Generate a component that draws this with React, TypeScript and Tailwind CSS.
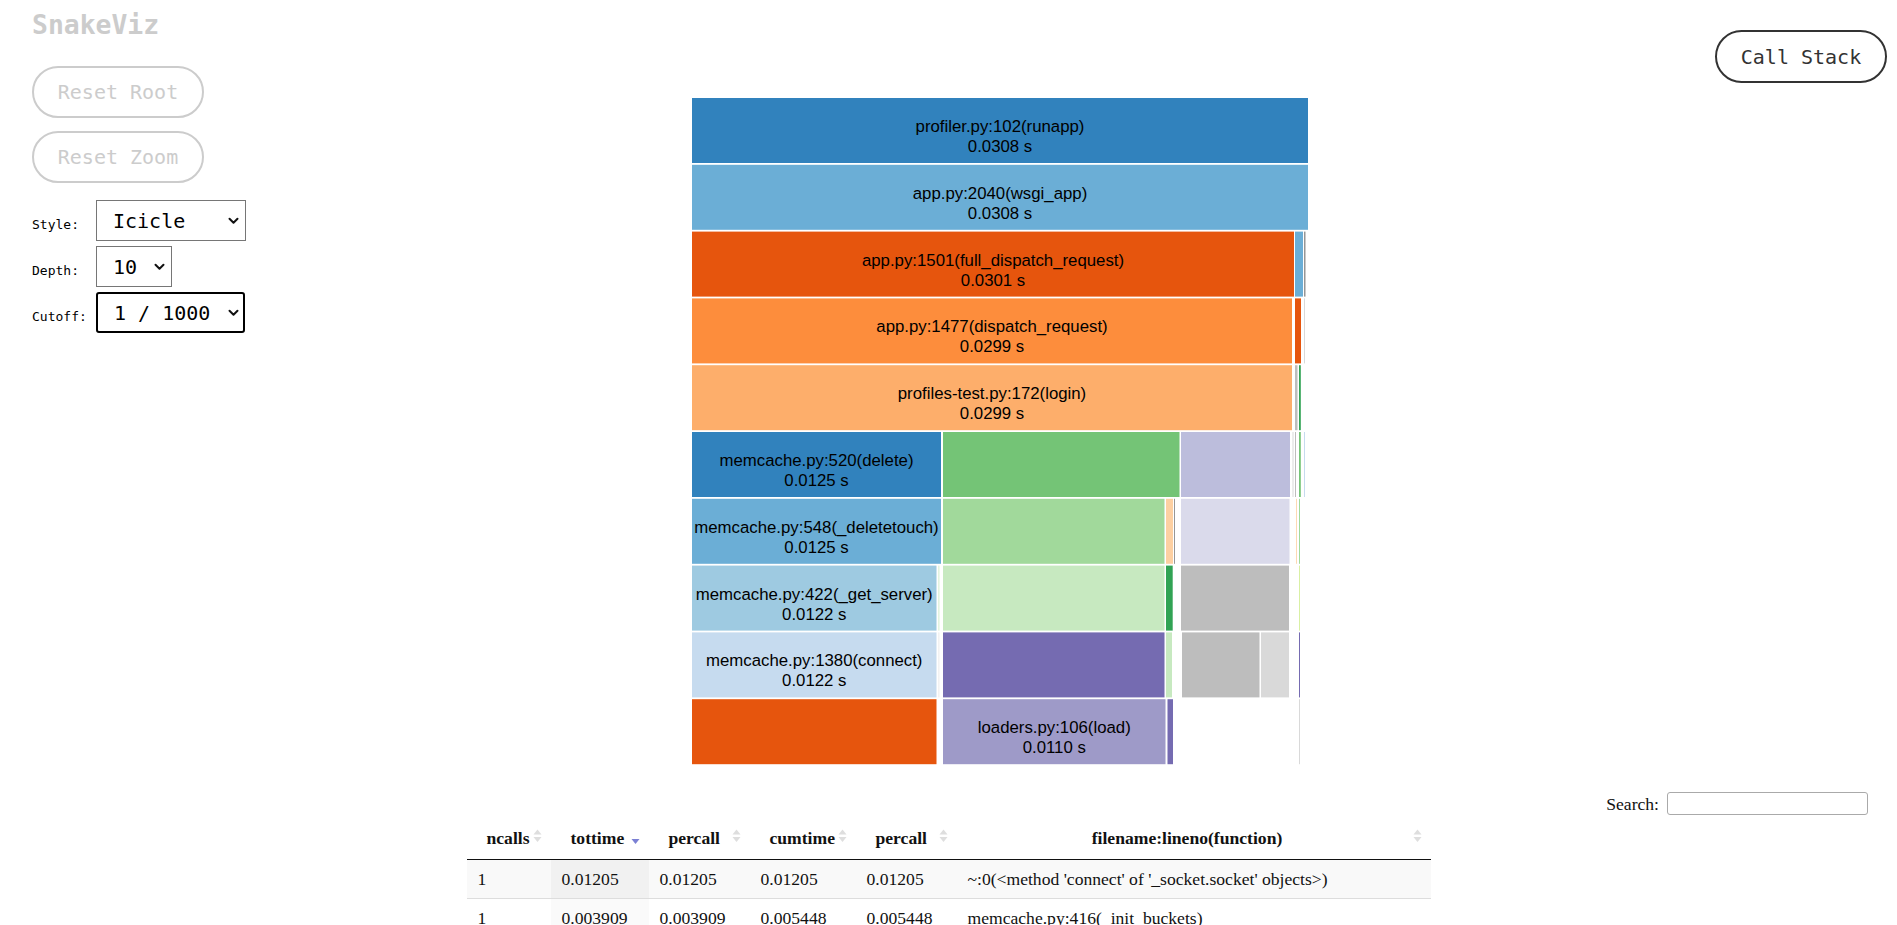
import { useState } from "react";

const MONO = "font-['DejaVu_Sans_Mono','Liberation_Mono',monospace]";
const SERIF = "font-['Liberation_Serif','Times_New_Roman',serif]";

const CHART_X = 692;
const CHART_W = 616;
const ROW_H = 66.8;

type Seg = { x0: number; x1: number; fill: string; name?: string; time?: string };

// icicle rows, x in page pixels
const rows: Seg[][] = [
  [{ x0: 692, x1: 1308, fill: "#3182bd", name: "profiler.py:102(runapp)", time: "0.0308 s" }],
  [{ x0: 692, x1: 1308, fill: "#6baed6", name: "app.py:2040(wsgi_app)", time: "0.0308 s" }],
  [
    { x0: 692, x1: 1294, fill: "#e6550d", name: "app.py:1501(full_dispatch_request)", time: "0.0301 s" },
    { x0: 1295, x1: 1303, fill: "#6baed6" },
    { x0: 1304, x1: 1305.5, fill: "#969696" },
  ],
  [
    { x0: 692, x1: 1292, fill: "#fd8d3c", name: "app.py:1477(dispatch_request)", time: "0.0299 s" },
    { x0: 1295, x1: 1301, fill: "#e6550d" },
    { x0: 1304, x1: 1305, fill: "#d9d9d9" },
  ],
  [
    { x0: 692, x1: 1292, fill: "#fdae6b", name: "profiles-test.py:172(login)", time: "0.0299 s" },
    { x0: 1295, x1: 1297.5, fill: "#bdbdbd" },
    { x0: 1299, x1: 1300.8, fill: "#31a354" },
  ],
  [
    { x0: 692, x1: 941, fill: "#3182bd", name: "memcache.py:520(delete)", time: "0.0125 s" },
    { x0: 943, x1: 1179.5, fill: "#74c476" },
    { x0: 1181, x1: 1290, fill: "#bcbddc" },
    { x0: 1292.5, x1: 1293.5, fill: "#d9d9d9" },
    { x0: 1295, x1: 1296, fill: "#bdbdbd" },
    { x0: 1299, x1: 1300.8, fill: "#74c476" },
    { x0: 1304, x1: 1305, fill: "#c6dbef" },
  ],
  [
    { x0: 692, x1: 941, fill: "#6baed6", name: "memcache.py:548(_deletetouch)", time: "0.0125 s" },
    { x0: 943, x1: 1164.5, fill: "#a1d99b" },
    { x0: 1166, x1: 1173, fill: "#fdd0a2" },
    { x0: 1174, x1: 1175, fill: "#969696" },
    { x0: 1181, x1: 1289.5, fill: "#dadaeb" },
    { x0: 1296, x1: 1296.8, fill: "#fdd0a2" },
    { x0: 1299, x1: 1300, fill: "#a1d99b" },
  ],
  [
    { x0: 692, x1: 936.5, fill: "#9ecae1", name: "memcache.py:422(_get_server)", time: "0.0122 s" },
    { x0: 938.5, x1: 939.3, fill: "#c7e9c0" },
    { x0: 943, x1: 1164.5, fill: "#c7e9c0" },
    { x0: 1166, x1: 1172.7, fill: "#31a354" },
    { x0: 1181, x1: 1289, fill: "#bdbdbd" },
    { x0: 1299, x1: 1300, fill: "#d9f0a3" },
  ],
  [
    { x0: 692, x1: 936.5, fill: "#c6dbef", name: "memcache.py:1380(connect)", time: "0.0122 s" },
    { x0: 938.5, x1: 939.3, fill: "#e5e5e5" },
    { x0: 943, x1: 1164.5, fill: "#756bb1" },
    { x0: 1166, x1: 1172, fill: "#c7e9c0" },
    { x0: 1182, x1: 1259.5, fill: "#bdbdbd" },
    { x0: 1261, x1: 1289, fill: "#d9d9d9" },
    { x0: 1299, x1: 1300, fill: "#756bb1" },
  ],
  [
    { x0: 692, x1: 936.5, fill: "#e6550d" },
    { x0: 943, x1: 1165.5, fill: "#9e9ac8", name: "loaders.py:106(load)", time: "0.0110 s" },
    { x0: 1167.5, x1: 1173, fill: "#756bb1" },
    { x0: 1299, x1: 1300, fill: "#d9d9d9" },
  ],
];

function Icicle() {
  return (
    <svg width={CHART_W} height={ROW_H * rows.length} className="block shrink-0">
      {rows.map((row, i) =>
        row.map((s, j) => {
          const top = i * ROW_H;
          const x = s.x0 - CHART_X;
          const w = s.x1 - s.x0;
          return (
            <g key={`${i}-${j}`}>
              <rect x={x} y={top} width={w} height={ROW_H - 1.8} fill={s.fill} />
              {s.name && (
                <text
                  x={x + w / 2}
                  textAnchor="middle"
                  fontFamily="'Liberation Sans', Arial, sans-serif"
                  fontSize={16.8}
                  fill="#000"
                >
                  <tspan x={x + w / 2} y={top + 34}>
                    {s.name}
                  </tspan>
                  <tspan x={x + w / 2} y={top + 54}>
                    {s.time}
                  </tspan>
                </text>
              )}
            </g>
          );
        })
      )}
    </svg>
  );
}

function Chevron() {
  return (
    <svg width="11" height="8" viewBox="0 0 11 8" className="pointer-events-none absolute">
      <path d="M1.5 1.8 L5.5 5.8 L9.5 1.8" fill="none" stroke="#111" strokeWidth="2" strokeLinecap="round" strokeLinejoin="round" />
    </svg>
  );
}

function SelectRow({
  label,
  value,
  options,
  width,
  chevronLeft,
  focused,
}: {
  label: string;
  value: string;
  options: string[];
  width: string;
  chevronLeft: string;
  focused?: boolean;
}) {
  const [v, setV] = useState(value);
  return (
    <div className="flex items-center">
      <label className={`${MONO} w-[64px] pt-[8px] text-[13px] text-black`}>{label}</label>
      <div className="relative flex items-center">
        <select
          value={v}
          onChange={(e) => setV(e.target.value)}
          className={`${MONO} ${width} h-[41px] appearance-none bg-white pl-[16px] text-[20px] text-black outline-none ${
            focused ? "rounded-[3px] border-2 border-black pl-[15px]" : "border border-[#767676]"
          }`}
        >
          {options.map((o) => (
            <option key={o}>{o}</option>
          ))}
        </select>
        <div className={`absolute ${chevronLeft} top-[17px]`}>
          <Chevron />
        </div>
      </div>
    </div>
  );
}

function SortIcon({ active }: { active?: boolean }) {
  if (active)
    return (
      <svg width="9" height="16" viewBox="0 0 9 16" className="absolute right-[9px] top-[13px]">
        <path d="M0.5 9 L8.5 9 L4.5 14 Z" fill="#7b80d4" />
      </svg>
    );
  return (
    <svg width="9" height="16" viewBox="0 0 9 16" className="absolute right-[9px] top-[11px]">
      <path d="M0.5 6.5 L8.5 6.5 L4.5 1.5 Z" fill="#dedede" />
      <path d="M0.5 9 L8.5 9 L4.5 14 Z" fill="#dedede" />
    </svg>
  );
}

const headers = [
  { label: "ncalls", w: "w-[84px]" },
  { label: "tottime", w: "w-[98px]", active: true },
  { label: "percall", w: "w-[101px]" },
  { label: "cumtime", w: "w-[106px]" },
  { label: "percall", w: "w-[101px]" },
  { label: "filename:lineno(function)", w: "w-[474px]" },
];

const tableRows = [
  ["1", "0.01205", "0.01205", "0.01205", "0.01205", "~:0(<method 'connect' of '_socket.socket' objects>)"],
  ["1", "0.003909", "0.003909", "0.005448", "0.005448", "memcache.py:416(_init_buckets)"],
];

export default function App() {
  return (
    <div className="min-h-screen bg-white">
      <div className="flex items-start">
        {/* controls */}
        <div className="flex w-[692px] shrink-0 flex-col pl-[32px] pt-[12px]">
          <h1 className={`${MONO} text-[26.4px] font-bold leading-none text-[#cccccc]`}>SnakeViz</h1>
          <button
            className={`${MONO} mt-[28px] h-[52px] w-[172px] rounded-full border-2 border-[#cccccc] text-[20px] text-[#cccccc]`}
          >
            Reset Root
          </button>
          <button
            className={`${MONO} mt-[13px] h-[52px] w-[172px] rounded-full border-2 border-[#cccccc] text-[20px] text-[#cccccc]`}
          >
            Reset Zoom
          </button>
          <div className="mt-[17px] flex flex-col gap-[5px]">
            <SelectRow label="Style:" value="Icicle" options={["Icicle", "Sunburst"]} width="w-[150px]" chevronLeft="left-[132px]" />
            <SelectRow label="Depth:" value="10" options={["3", "5", "10", "15", "20"]} width="w-[76px]" chevronLeft="left-[58px]" />
            <SelectRow
              label="Cutoff:"
              value="1 / 1000"
              options={["1 / 100", "1 / 1000", "None"]}
              width="w-[149px]"
              chevronLeft="left-[132px]"
              focused
            />
          </div>
        </div>

        {/* chart */}
        <div className="mt-[98px]">
          <Icicle />
        </div>

        {/* call stack */}
        <button
          className={`${MONO} ml-auto mr-[10px] mt-[30px] h-[53px] w-[172px] rounded-full border-2 border-[#333333] text-[20px] text-[#333333]`}
        >
          Call Stack
        </button>
      </div>

      {/* stats table */}
      <div className={`${SERIF} pt-[26px] text-[17.6px] leading-[20px] text-[#111]`}>
        <div className="flex h-[23px] items-center justify-end pr-[29px]">
          <label className="mr-[8px]">Search:</label>
          <input className="h-[23px] w-[201px] rounded-[3px] border border-[#aaaaaa] outline-none" />
        </div>
        <table className="mx-auto mt-[2px] w-[964px] table-fixed border-collapse">
          <colgroup>
            {headers.map((h, i) => (
              <col key={i} className={h.w} />
            ))}
          </colgroup>
          <thead>
            <tr className="border-b border-[#111]">
              {headers.map((h, i) => (
                <th key={i} className="relative py-[11px] pl-[20px] pr-[33px] text-center font-bold whitespace-nowrap">
                  {h.label}
                  <SortIcon active={h.active} />
                </th>
              ))}
            </tr>
          </thead>
          <tbody>
            {tableRows.map((r, i) => (
              <tr key={i} className={`border-b border-[#dddddd] ${i % 2 === 0 ? "bg-[#f9f9f9]" : "bg-white"}`}>
                {r.map((c, j) => (
                  <td
                    key={j}
                    className={`px-[11px] py-[9px] whitespace-nowrap ${
                      j === 1 ? (i % 2 === 0 ? "bg-[#f1f1f1]" : "bg-[#fafafa]") : ""
                    }`}
                  >
                    {c}
                  </td>
                ))}
              </tr>
            ))}
          </tbody>
        </table>
      </div>
    </div>
  );
}
